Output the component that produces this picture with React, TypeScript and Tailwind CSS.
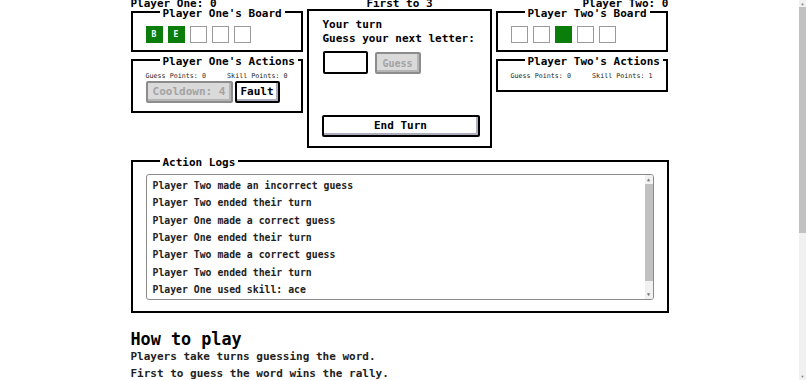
import type { ReactNode } from 'react';

const FONT = "font-['DejaVu_Sans_Mono','Liberation_Mono',monospace]";

interface BoxProps {
  title: string;
  className?: string;
  children: ReactNode;
}

// NES-style container with the title on the top border
function Box({ title, className = '', children }: BoxProps) {
  return (
    <fieldset className={`border-2 border-black min-w-0 ${className}`}>
      <legend className="ml-[14px] px-[3px] whitespace-nowrap text-[11px] leading-[6px] font-bold text-black">
        <span className="relative top-[2px]">{title}</span>
      </legend>
      {children}
    </fieldset>
  );
}

function Tile({ letter, filled }: { letter?: string; filled?: boolean }) {
  return (
    <div
      className={`w-[17px] h-[17px] flex items-center justify-center text-[8px] font-bold text-white border ${
        filled ? 'bg-[#0b7d0b] border-[#0b7d0b]' : 'bg-white border-[#9a9a9a]'
      }`}
    >
      {letter}
    </div>
  );
}

function Points({ guess, skill }: { guess: number; skill: number }) {
  return (
    <div className="mt-[9px] flex justify-between text-[6.7px] leading-[8px] text-[#222]">
      <span>Guess Points: {guess}</span>
      <span>Skill Points: {skill}</span>
    </div>
  );
}

const logs = [
  'Player Two made an incorrect guess',
  'Player Two ended their turn',
  'Player One made a correct guess',
  'Player One ended their turn',
  'Player Two made a correct guess',
  'Player Two ended their turn',
  'Player One used skill: ace',
];

export default function App() {
  return (
    <div className={`h-[380px] w-[806px] overflow-hidden flex bg-white text-black ${FONT}`}>
      <div className="flex-1 min-w-0">
        <div className="w-[538px] mx-auto">
          {/* score line */}
          <div className="-mt-[1px] h-[10px] flex justify-between text-[11px] leading-[10px] font-bold">
            <span>Player One: 0</span>
            <span>First to 3</span>
            <span>Player Two: 0</span>
          </div>

          <div className="flex items-start gap-[4px]">
            {/* left column */}
            <div className="w-[172px] flex flex-col gap-[5px]">
              <Box title="Player One's Board" className="px-[13px] pb-[7px]">
                <div className="mt-[11px] flex gap-[5px]">
                  <Tile letter="B" filled />
                  <Tile letter="E" filled />
                  <Tile />
                  <Tile />
                  <Tile />
                </div>
              </Box>
              <Box title="Player One's Actions" className="px-[13px] pb-[8px]">
                <Points guess={0} skill={0} />
                <div className="mt-[1px] flex gap-[2px]">
                  <button
                    disabled
                    className="w-[87px] h-[22px] border-2 border-[#8c8c8c] rounded-[2px] bg-[#dadada] text-[#a3a3a3] text-[11px] font-bold shadow-[inset_-2px_-2px_#b5b5b5]"
                  >
                    Cooldown: 4
                  </button>
                  <button className="w-[45px] h-[22px] border-2 border-black rounded-[2px] bg-white text-[11px] font-bold shadow-[inset_-2px_-2px_#adafbc]">
                    Fault
                  </button>
                </div>
              </Box>
            </div>

            {/* center column */}
            <div className="w-[185px] border-2 border-black pl-[14px] pr-[10px] pt-[7px] pb-[9px]">
              <div className="text-[11px] leading-[14px] font-bold">Your turn</div>
              <div className="text-[11px] leading-[14px] font-bold">Guess your next letter:</div>
              <div className="mt-[5px] flex items-end gap-[7px]">
                <input className="w-[45px] h-[23px] border-2 border-black rounded-[2px] bg-white outline-none" />
                <button
                  disabled
                  className="w-[46px] h-[22px] border-2 border-[#8c8c8c] rounded-[2px] bg-[#dadada] text-[#a3a3a3] text-[10px] font-bold shadow-[inset_-2px_-2px_#b5b5b5]"
                >
                  Guess
                </button>
              </div>
              <button className="mt-[41px] -ml-[1px] w-[158px] h-[22px] border-2 border-black rounded-[2px] bg-white text-[11px] font-bold shadow-[inset_-2px_-2px_#adafbc]">
                End Turn
              </button>
            </div>

            {/* right column */}
            <div className="w-[172px] flex flex-col gap-[5px]">
              <Box title="Player Two's Board" className="px-[13px] pb-[7px]">
                <div className="mt-[11px] flex gap-[5px]">
                  <Tile />
                  <Tile />
                  <Tile filled />
                  <Tile />
                  <Tile />
                </div>
              </Box>
              <Box title="Player Two's Actions" className="px-[13px] pb-[10px]">
                <Points guess={0} skill={1} />
              </Box>
            </div>
          </div>

          {/* action logs */}
          <Box title="Action Logs" className="mt-[10px] px-[13px] pb-[11px]">
            <div className="mt-[10px] h-[126px] flex border border-[#8a8a8a] rounded-[3px] overflow-hidden">
              <div className="flex-1 pl-[6px] pt-[2px] text-[9.8px] leading-[17.33px] font-bold text-[#222]">
                {logs.map((l, i) => (
                  <div key={i}>{l}</div>
                ))}
              </div>
              <div className="w-[8px] flex flex-col bg-[#f1f1f1]">
                <div className="h-[9px] flex items-center justify-center text-[5px] leading-none text-[#777]">▲</div>
                <div className="flex-1 mb-[9px] bg-[#c1c1c1]" />
                <div className="h-[9px] flex items-center justify-center text-[5px] leading-none text-[#777]">▼</div>
              </div>
            </div>
          </Box>

          {/* how to play */}
          <h2 className="mt-[17px] text-[16.8px] leading-[18px] font-bold">How to play</h2>
          <p className="text-[11px] leading-[17px] font-bold text-[#222]">Players take turns guessing the word.</p>
          <p className="text-[11px] leading-[17px] font-bold text-[#222]">First to guess the word wins the rally.</p>
        </div>
      </div>

      {/* page scrollbar */}
      <div className="w-[7px] flex flex-col bg-[#f1f1f1]">
        <div className="h-[7px] flex items-center justify-center text-[4px] leading-none text-[#888]">▲</div>
        <div className="h-[226px] bg-[#c1c1c1]" />
        <div className="flex-1" />
        <div className="h-[7px] flex items-center justify-center text-[4px] leading-none text-[#888]">▼</div>
      </div>
    </div>
  );
}
